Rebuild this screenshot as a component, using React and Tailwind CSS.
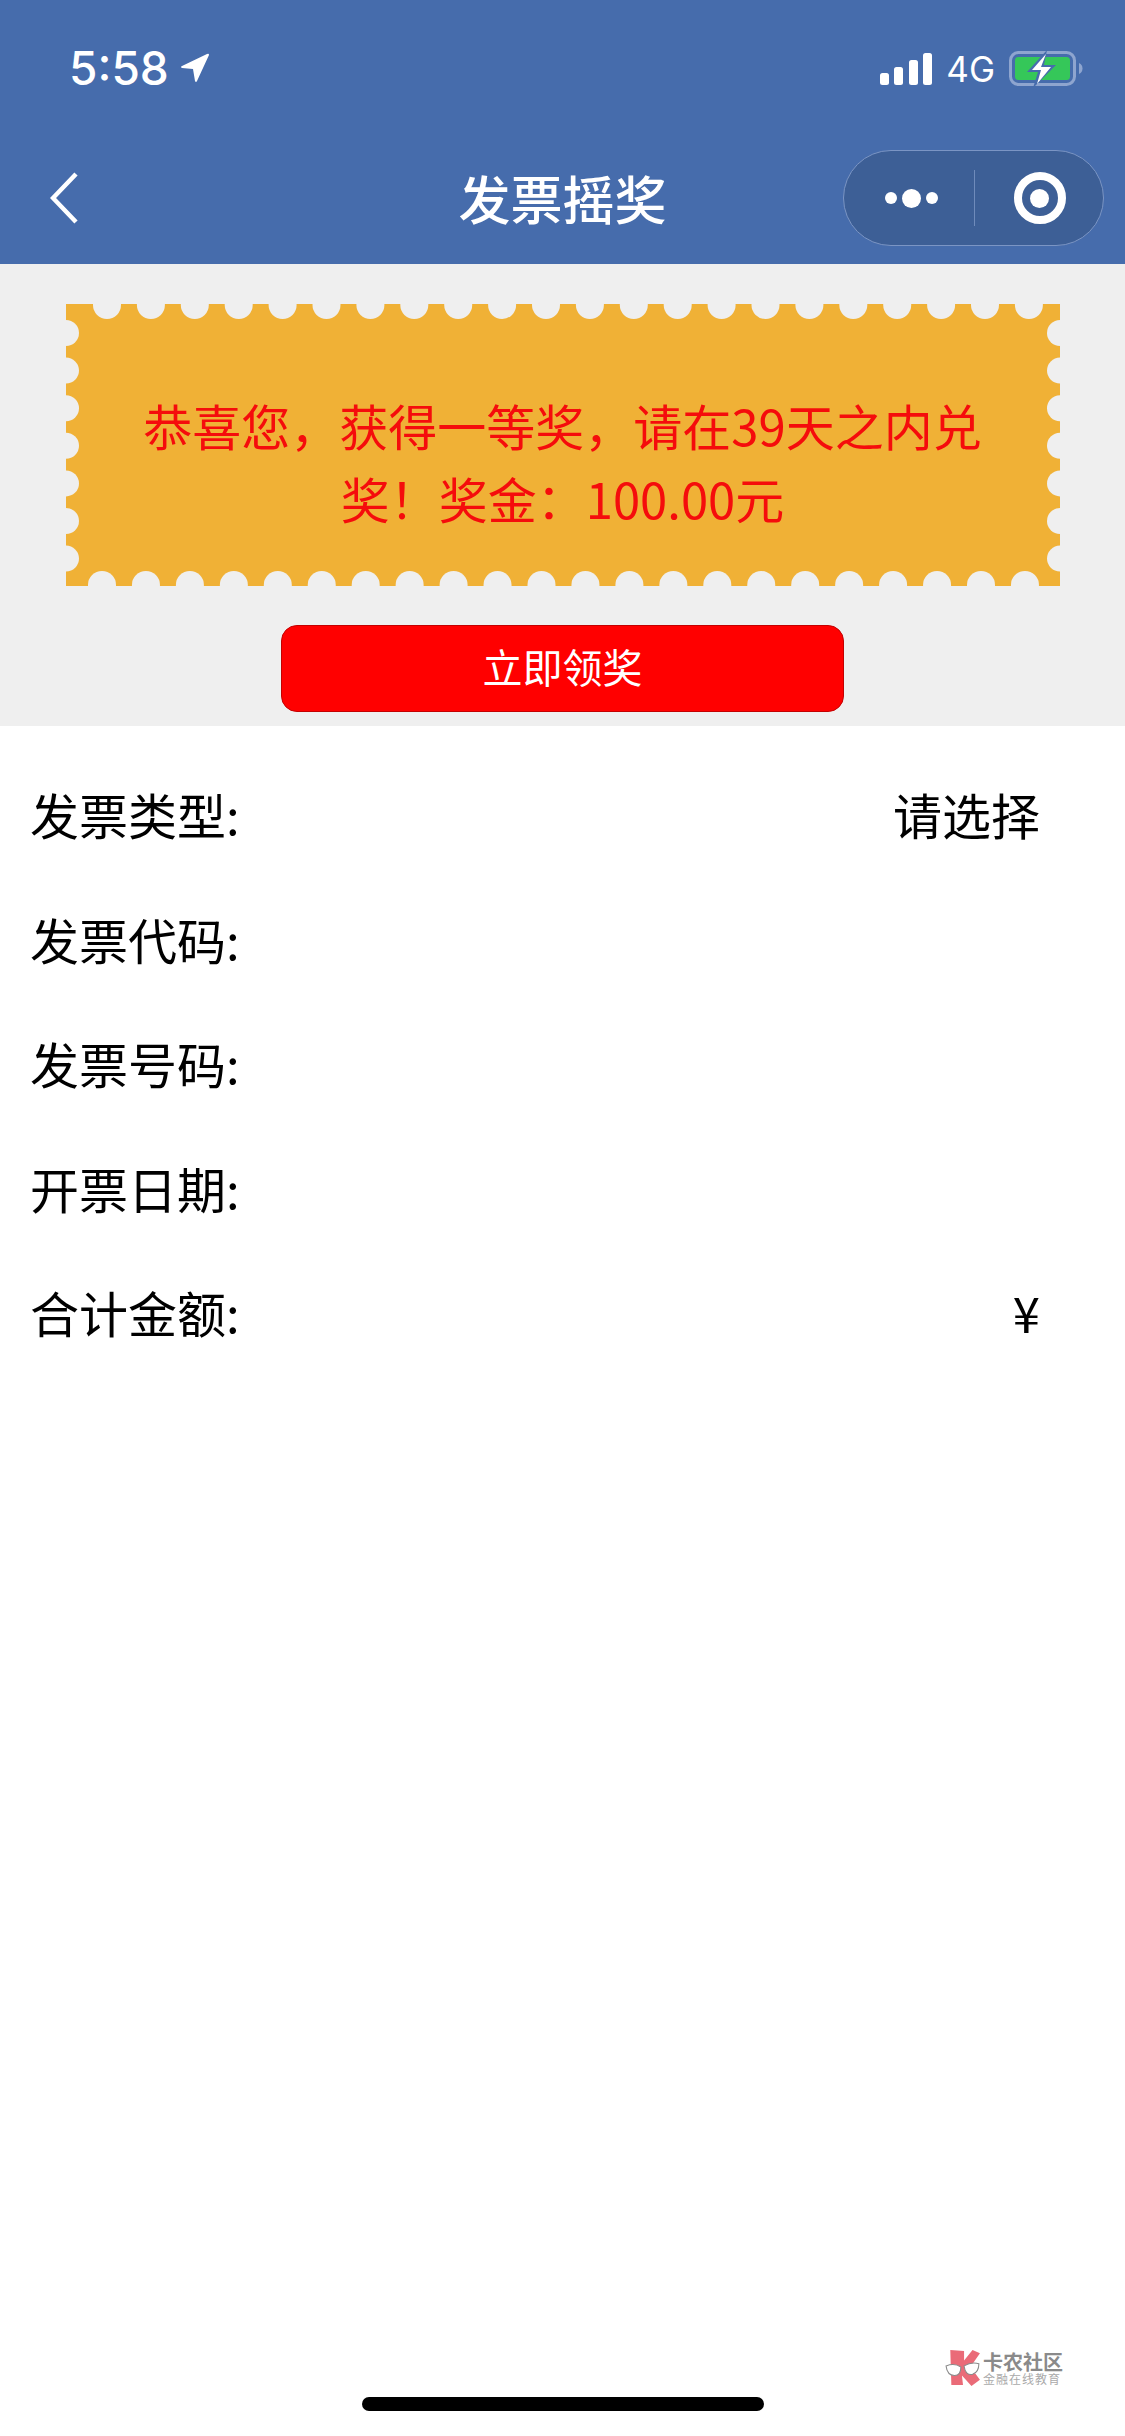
const topHoles = Array.from({ length: 22 }, (_, i) => 107 - 66 + i * 43.9)
const bottomHoles = Array.from({ length: 22 }, (_, i) => 102 - 66 + i * 43.95)
const sideHoles = Array.from({ length: 7 }, (_, i) => 333 - 304 + i * 37.6)

function Stamp() {
  return (
    <svg className="absolute inset-0" width="994" height="282" viewBox="0 0 994 282">
      <rect width="994" height="282" fill="#f0b136" />
      {topHoles.map((x) => <circle key={x} cx={x} cy="1" r="14" fill="#efefef" />)}
      {bottomHoles.map((x) => <circle key={x} cx={x} cy="281" r="14" fill="#efefef" />)}
      {sideHoles.map((y) => <circle key={y} cx="0" cy={y} r="13" fill="#efefef" />)}
      {sideHoles.map((y) => <circle key={y} cx="994" cy={y} r="13" fill="#efefef" />)}
    </svg>
  )
}

function Signal() {
  return (
    <svg width="52" height="33" viewBox="0 0 52 33" fill="#fff">
      <rect x="0" y="20" width="9" height="12" rx="2.5" />
      <rect x="14" y="14" width="9" height="18" rx="2.5" />
      <rect x="29" y="7" width="9" height="25" rx="2.5" />
      <rect x="43" y="0" width="9" height="32" rx="2.5" />
    </svg>
  )
}

function Battery() {
  return (
    <svg width="74" height="36" viewBox="0 0 74 36">
      <rect x="1.5" y="1.5" width="64" height="32" rx="8" fill="none" stroke="#8ea5cf" strokeWidth="3" />
      <path d="M70 12c2.500 1 3.500 3 3.500 5.500S72.500 22 70 23z" fill="#8ea5cf" />
      <rect x="6" y="6" width="55" height="23" rx="3.500" fill="#35c759" />
      <path d="M38 -1 L18 21 L29 21 L24 37 L47 14 L35 14 Z" fill="#466cac" />
      <path d="M37 3 L23 19 L32 19 L28 33 L42 16 L32 16 Z" fill="#fff" />
    </svg>
  )
}

function Capsule() {
  return (
    <div className="flex h-[96px] w-[261px] items-center rounded-full border border-[#7b95c4] bg-[#3d5f96]">
      <div className="flex w-[130px] items-center justify-center gap-[5px] pl-[4px]">
        <span className="h-[12px] w-[12px] rounded-full bg-white" />
        <span className="h-[19px] w-[19px] rounded-full bg-white" />
        <span className="h-[12px] w-[12px] rounded-full bg-white" />
      </div>
      <div className="h-[56px] w-px bg-[#6f8bbb]" />
      <div className="flex flex-1 items-center justify-center pl-[1px]">
        <div className="flex h-[52px] w-[52px] items-center justify-center rounded-full border-[8px] border-white">
          <span className="h-[19px] w-[19px] rounded-full bg-white" />
        </div>
      </div>
    </div>
  )
}

const rows = [
  { label: '发票类型:', value: '请选择' },
  { label: '发票代码:' },
  { label: '发票号码:' },
  { label: '开票日期:' },
  { label: '合计金额:', value: '¥' },
]

export default function App() {
  return (
    <div className="relative flex h-[2436px] w-[1125px] flex-col overflow-hidden bg-white font-['Noto_Sans_CJK_SC',sans-serif]">
      <div className="bg-[#466cac] text-white">
        <div className="flex h-[132px] items-start justify-between pl-[69px] pr-[42px] pt-[46px]">
          <div className="flex items-center gap-[11px]">
            <span className="font-['Inter',sans-serif] text-[46px] leading-[44px] font-medium">5:58</span>
            <svg width="30" height="30" viewBox="0 0 30 30" fill="#fff">
              <path d="M27 1 Q29 0 29 2 L17 28 Q16 30 15 28 L13 16 L2 15 Q0 14 2 13 Z" />
            </svg>
          </div>
          <div className="flex items-center gap-[14px] pt-[5px]">
            <Signal />
            <span className="font-['Inter',sans-serif] text-[35px] leading-[36px]">4G</span>
            <Battery />
          </div>
        </div>
        <div className="grid h-[132px] grid-cols-[1fr_auto_1fr] items-center px-[21px]">
          <svg className="ml-[29px]" width="28" height="52" viewBox="0 0 28 52" fill="none" stroke="#fff" strokeWidth="4.500">
            <path d="M26 2 L3 26 L26 50" />
          </svg>
          <h1 className="text-[52px] leading-none font-medium">发票摇奖</h1>
          <div className="flex justify-end">
            <Capsule />
          </div>
        </div>
      </div>

      <div className="flex flex-col items-center bg-[#efefef] pb-[14px] pt-[40px]">
        <div className="relative flex h-[282px] w-[994px] items-center justify-center pt-[31px]">
          <Stamp />
          <p className="relative w-[860px] text-center text-[49px] leading-[73px] text-[#f50c0c]">
            恭喜您，获得一等奖，请在39天之内兑奖！奖金：100.00元
          </p>
        </div>
        <button className="mt-[39px] h-[87px] w-[563px] rounded-[16px] border border-[#c40000] bg-[#ff0000] pb-[5px] text-[40px] text-white">
          立即领奖
        </button>
      </div>

      <div className="pt-[28px]">
        {rows.map((row) => (
          <div key={row.label} className="flex h-[124.500px] items-center justify-between pb-[5px] pl-[30px] pr-[85px] text-[49px] text-black">
            <span>{row.label}</span>
            {row.value && <span>{row.value}</span>}
          </div>
        ))}
      </div>

      <div className="mt-auto flex justify-center pb-[25px]">
        <div className="h-[14px] w-[402px] rounded-full bg-black" />
      </div>

      <div className="absolute left-[945px] top-[2350px] flex items-center gap-[2px]">
        <svg width="36" height="36" viewBox="0 0 34 34">
          <path d="M5 0 L18 1 L18 10 L26 0 L33 3 L24 16 L33 28 L25 34 L16 24 L17 33 L6 33 Z" fill="#ea6b78" />
          <path d="M1 15 Q9 12 15 16 Q15 24 9 24 Q2 24 1 15 Z M18 15 Q25 11 32 13 Q32 21 26 23 Q19 24 18 15 Z" fill="#fff" stroke="#8a8a8a" strokeWidth="1" />
        </svg>
        <div className="flex flex-col text-[#8a8a8a]">
          <span className="text-[20px] leading-[21px] font-bold">卡农社区</span>
          <span className="text-[12px] leading-[14px] tracking-[1px] text-[#aaaaaa]">金融在线教育</span>
        </div>
      </div>
    </div>
  )
}
